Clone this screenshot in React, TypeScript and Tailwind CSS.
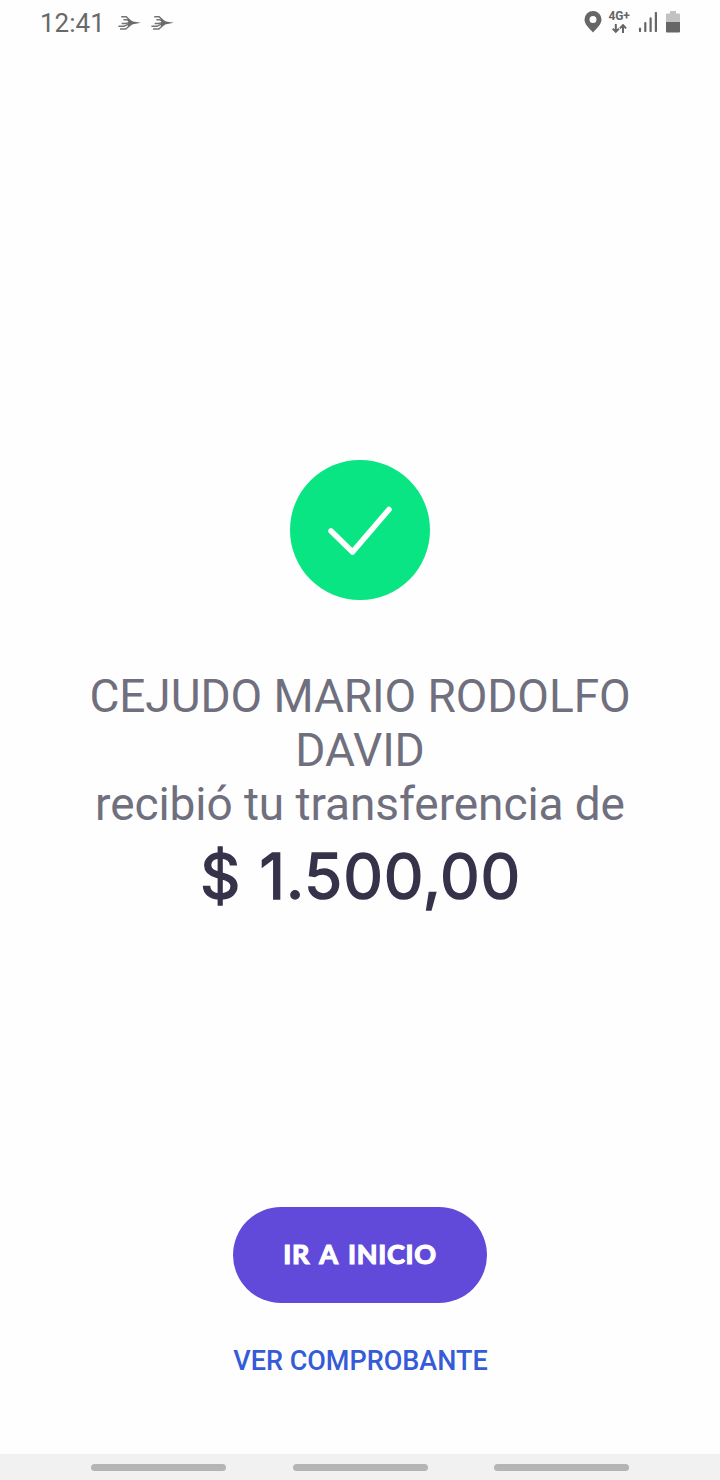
const navKeys = ['recents', 'home', 'back'];

function FeatherIcon() {
  return (
    <svg width="24" height="16" viewBox="0 0 24 16" fill="none" stroke="#747474" strokeWidth="1.5">
      <path d="M3.2 1.8h5l4.6 4.4" />
      <path d="M5.4 4.7h3.4l4.6 2.6" />
      <path d="M3.6 8.5h3.6l5.6-1" />
      <path d="M.4 11.3h5.6l5.8-3" />
      <path d="M2 14.1h5.8l5.4-4.8" />
      <path d="M9.6 3.6 15 6.4l7.8 1.4-7.8 1.4-5.2 2.4.6-4z" fill="#6a6a6a" stroke="none" />
    </svg>
  );
}

function PinIcon() {
  return (
    <svg width="18" height="22" viewBox="0 0 18 22" fill="#666">
      <path
        fillRule="evenodd"
        d="M9 .1A8.5 8.5 0 0 0 .5 8.6C.5 12.8 4.2 16.8 9 21.4c4.8-4.6 8.5-8.6 8.5-12.8A8.5 8.5 0 0 0 9 .1zm0 5a3.5 3.5 0 1 1 0 7 3.5 3.5 0 0 1 0-7z"
      />
    </svg>
  );
}

function DataIcon() {
  return (
    <div className="flex w-[22px] flex-col items-center">
      <span className="text-[12px] font-bold leading-[11px] tracking-[-0.2px] text-[#666]">
        4G+
      </span>
      <svg
        className="mt-[2px]"
        width="16"
        height="10"
        viewBox="0 0 16 10"
        fill="none"
        stroke="#666"
        strokeWidth="2"
      >
        <path d="M4.8 0v8M1.7 4.6l3.1 3.3 3.1-3.3" />
        <path d="M12 9V1M8.9 4.4 12 1.1l3.1 3.3" />
      </svg>
    </div>
  );
}

function SignalIcon() {
  return (
    <svg width="20" height="20" viewBox="0 0 20 20" stroke="#666" strokeWidth="2.2" strokeLinecap="round">
      <path d="M2 16.6V19M7.3 11v8M12.6 6.4V19M17.9 1v18" />
    </svg>
  );
}

function BatteryIcon() {
  return (
    <svg width="14" height="22" viewBox="0 0 14 22">
      <path d="M4 0h6v2.5h3a1 1 0 0 1 1 1V11H0V3.5a1 1 0 0 1 1-1h3z" fill="#c2c2c2" />
      <path d="M0 11h14v9.5a1 1 0 0 1-1 1H1a1 1 0 0 1-1-1z" fill="#666" />
    </svg>
  );
}

function StatusBar() {
  return (
    <header className="flex h-[46px] items-center justify-between px-10">
      <div className="flex items-center">
        <span className="w-[78px] text-[26px] leading-none text-[#696969]">12:41</span>
        <div className="flex gap-[9px]">
          <FeatherIcon />
          <FeatherIcon />
        </div>
      </div>
      <div className="flex items-center pb-[2px]">
        <PinIcon />
        <div className="ml-[6px] mr-[8px]">
          <DataIcon />
        </div>
        <SignalIcon />
        <div className="ml-[8px]">
          <BatteryIcon />
        </div>
      </div>
    </header>
  );
}

export default function App() {
  return (
    <div className="flex h-[1480px] w-[720px] flex-col bg-[#fefefe] font-[Roboto,sans-serif]">
      <StatusBar />

      {/* Result */}
      <main className="flex flex-1 flex-col items-center pt-[414px] text-center">
        <svg width="140" height="140" viewBox="0 0 140 140" fill="none">
          <circle cx="70" cy="70" r="70" fill="#09e582" />
          <path
            d="M41 71 62.5 92 99 49.5"
            stroke="#fff"
            strokeWidth="5.6"
            strokeLinecap="round"
            strokeLinejoin="round"
          />
        </svg>

        <p className="mt-[69px] w-[600px] text-[46px] leading-[54px] tracking-[-0.08px] text-[#706f7e]">
          CEJUDO MARIO RODOLFO
          <br />
          DAVID
          <br />
          recibió tu transferencia de
        </p>
        <p className="mt-[5px] whitespace-nowrap pl-px font-[Inter,sans-serif] text-[63px] leading-[80px] tracking-[0.8px] text-[#35324a] [-webkit-text-stroke:1.5px_#35324a] [stroke-linejoin:round]">
          $ 1.500,00
        </p>
      </main>

      {/* Actions */}
      <div className="flex flex-col items-center pb-[73px]">
        <button className="h-24 w-[254px] rounded-full bg-[#614ad9] pb-[2px] font-[Lato,sans-serif] text-[27px] font-bold tracking-[0.7px] text-white [-webkit-text-stroke:1.2px_#fff] [word-spacing:3px]">
          IR A INICIO
        </button>
        <button className="mt-[38px] whitespace-nowrap pl-px text-[27px] font-medium leading-10 text-[#365bd7]">
          VER COMPROBANTE
        </button>
      </div>

      {/* Navigation keys */}
      <nav className="flex h-[26px] items-center justify-center gap-[66.5px] bg-[#f1f1f1]">
        {navKeys.map((key) => (
          <span key={key} className="h-[7px] w-[135px] rounded-full bg-[#b5b5b5]" />
        ))}
      </nav>
    </div>
  );
}
